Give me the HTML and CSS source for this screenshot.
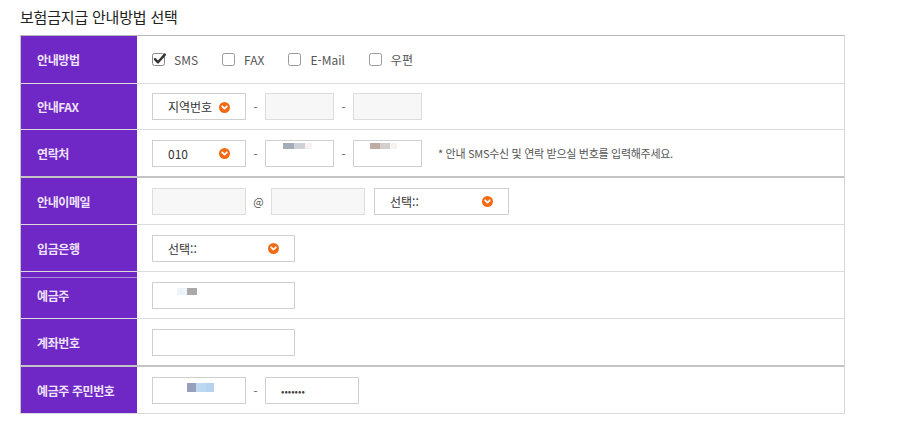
FILE: index.html
```html
<!DOCTYPE html>
<html lang="ko">
<head>
<meta charset="utf-8">
<link rel="stylesheet" href="styles.css">
</head>
<body>
<div class="page">
  <h2 class="title">보험금지급 안내방법 선택</h2>
  <div class="form">
    <div class="row r1">
      <div class="label">안내방법</div>
      <div class="cell">
        <label class="chk"><svg width="15" height="15" viewBox="0 0 15 15"><rect x="0.5" y="1.5" width="12" height="12" rx="2" fill="#fff" stroke="#888"/><path d="M3 7.2 L6 10.3 L12.8 2.6" fill="none" stroke="#333" stroke-width="2.4" stroke-linecap="round" stroke-linejoin="round"/></svg><span>SMS</span></label>
        <label class="chk"><svg width="15" height="15" viewBox="0 0 15 15"><rect x="0.5" y="1.5" width="12" height="12" rx="2" fill="#fff" stroke="#999"/></svg><span>FAX</span></label>
        <label class="chk"><svg width="15" height="15" viewBox="0 0 15 15"><rect x="0.5" y="1.5" width="12" height="12" rx="2" fill="#fff" stroke="#999"/></svg><span>E-Mail</span></label>
        <label class="chk"><svg width="15" height="15" viewBox="0 0 15 15"><rect x="0.5" y="1.5" width="12" height="12" rx="2" fill="#fff" stroke="#999"/></svg><span>우편</span></label>
      </div>
    </div>
    <div class="row r2">
      <div class="label">안내FAX</div>
      <div class="cell">
        <div class="ctl sel w94"><span>지역번호</span><svg class="arr" width="11" height="11" viewBox="0 0 11 11"><circle cx="5.5" cy="5.5" r="5.5" fill="#f26a14"/><path d="M3.2 4.3 L5.5 6.6 L7.8 4.3" fill="none" stroke="#fff" stroke-width="1.8" stroke-linecap="round" stroke-linejoin="round"/></svg></div>
        <span class="sep">-</span>
        <div class="ctl dis w69"></div>
        <span class="sep">-</span>
        <div class="ctl dis w69"></div>
      </div>
    </div>
    <div class="row r3 thick">
      <div class="label">연락처</div>
      <div class="cell">
        <div class="ctl sel w94"><span>010</span><svg class="arr" width="11" height="11" viewBox="0 0 11 11"><circle cx="5.5" cy="5.5" r="5.5" fill="#f26a14"/><path d="M3.2 4.3 L5.5 6.6 L7.8 4.3" fill="none" stroke="#fff" stroke-width="1.8" stroke-linecap="round" stroke-linejoin="round"/></svg></div>
        <span class="sep">-</span>
        <div class="ctl w69 blur-wrap"><span class="blur" style="margin-left:17px"><b style="background:#a3adba;width:11px"></b><b style="background:#cfd1d8;width:11px"></b><b style="background:#f6f1ef;width:7px"></b></span></div>
        <span class="sep">-</span>
        <div class="ctl w69 blur-wrap"><span class="blur" style="margin-left:16px"><b style="background:#bcaca4;width:10px"></b><b style="background:#d2cfcc;width:10px"></b><b style="background:#f6f2f0;width:7px"></b></span></div>
        <span class="note">* 안내 SMS수신 및 연락 받으실 번호를 입력해주세요.</span>
      </div>
    </div>
    <div class="row r4">
      <div class="label">안내이메일</div>
      <div class="cell">
        <div class="ctl dis w94"></div>
        <span class="sep at">@</span>
        <div class="ctl dis w93"></div>
        <div class="ctl sel w135 ml9"><span>선택::</span><svg class="arr" width="11" height="11" viewBox="0 0 11 11"><circle cx="5.5" cy="5.5" r="5.5" fill="#f26a14"/><path d="M3.2 4.3 L5.5 6.6 L7.8 4.3" fill="none" stroke="#fff" stroke-width="1.8" stroke-linecap="round" stroke-linejoin="round"/></svg></div>
      </div>
    </div>
    <div class="row r5">
      <div class="label">입금은행</div>
      <div class="cell">
        <div class="ctl sel w143"><span>선택::</span><svg class="arr" width="11" height="11" viewBox="0 0 11 11"><circle cx="5.5" cy="5.5" r="5.5" fill="#f26a14"/><path d="M3.2 4.3 L5.5 6.6 L7.8 4.3" fill="none" stroke="#fff" stroke-width="1.8" stroke-linecap="round" stroke-linejoin="round"/></svg></div>
      </div>
    </div>
    <div class="row r6">
      <div class="label inner-line">예금주</div>
      <div class="cell">
        <div class="ctl w143 blur-wrap"><span class="blur" style="margin-left:24px"><b style="background:#eef4fa;width:10px"></b><b style="background:#a9a9a9;width:10px"></b></span></div>
      </div>
    </div>
    <div class="row r7 thick">
      <div class="label">계좌번호</div>
      <div class="cell">
        <div class="ctl w143"></div>
      </div>
    </div>
    <div class="row r8">
      <div class="label">예금주 주민번호</div>
      <div class="cell">
        <div class="ctl w94 blur-wrap"><span class="blur b2" style="margin-left:34px"><b style="background:#979fbd;width:9px"></b><b style="background:#bcd9f1;width:10px"></b><b style="background:#b6d2ec;width:8px"></b></span></div>
        <span class="sep">-</span>
        <div class="ctl w93 pw"><span>•••••••</span></div>
      </div>
    </div>
  </div>
</div>
</body>
</html>
```

FILE: styles.css
```css
html, body {
  margin: 0;
  padding: 0;
  background: #fff;
}
body {
  font-family: "Noto Sans CJK KR", "Noto Sans", sans-serif;
  color: #444;
}
.page {
  padding: 6px 0 0 20px;
  width: 825px;
}
.title {
  margin: 0 0 8px 0;
  font-size: 15px;
  line-height: 21px;
  font-weight: normal;
  color: #222;
  letter-spacing: -0.2px;
}
.form {
  border-top: 1px solid #b9b9b9;
  border-left: 1px solid #c8c8c8;
  border-right: 1px solid #d6d6d6;
  border-bottom: 1px solid #d9d9d9;
}
.row {
  display: grid;
  grid-template-columns: 116px 1fr;
  height: 46px;
  border-bottom: 1px solid #dcdcdc;
}
.row.r1 { height: 47px; }
.row.r2 { height: 45px; }
.row.thick {
  border-bottom: 2px solid #c4c4c4;
}
.row.r8 {
  border-bottom: none;
}
.label {
  background: #6f27c6;
  color: #ede3f8;
  font-size: 12px;
  font-weight: bold;
  display: flex;
  align-items: center;
  padding-left: 16px;
  letter-spacing: -0.4px;
}
.label.inner-line {
  box-shadow: inset 0 5px 0 #6f27c6, inset 0 6px 0 #a98bd6;
}
.cell {
  display: flex;
  align-items: center;
  padding-left: 15px;
  font-size: 12px;
}
.chk {
  display: flex;
  align-items: center;
  margin-right: 24px;
  color: #555;
  font-size: 12px;
}
.chk svg {
  margin-right: 7px;
  display: block;
}
.ctl {
  box-sizing: border-box;
  height: 27px;
  border: 1px solid #cfcfcf;
  background: #fff;
  display: flex;
  align-items: center;
  position: relative;
  font-size: 12px;
  color: #333;
}
.ctl.sel span {
  padding-left: 15px;
}
.ctl.dis {
  background: #f7f7f7;
  border-color: #dddddd;
}
.w69 { width: 69px; }
.w93 { width: 94px; }
.w94 { width: 94px; }
.w135 { width: 135px; }
.w143 { width: 143px; }
.ml9 { margin-left: 9px; }
.arr {
  position: absolute;
  right: 15px;
  top: 50%;
  margin-top: -5px;
  display: block;
}
.sep {
  width: 19px;
  text-align: center;
  color: #666;
  font-size: 12px;
}
.sep.at {
  width: 25px;
  font-size: 11px;
  color: #555;
}
.blur-wrap {
  align-items: flex-start;
}
.blur {
  display: flex;
  margin-top: 5px;
  height: 7px;
}
.blur b {
  display: block;
  height: 7px;
}
.blur.b2 {
  margin-top: 5px;
  height: 9px;
}
.blur.b2 b { height: 9px; }
.r3 .blur { margin-top: 2px; height: 6px; }
.r3 .blur b { height: 6px; }
.pw span {
  padding-left: 15px;
  font-size: 10px;
  color: #444;
  letter-spacing: 0;
}
.note {
  margin-left: 16px;
  font-size: 11px;
  color: #555;
  letter-spacing: -0.3px;
}
```
